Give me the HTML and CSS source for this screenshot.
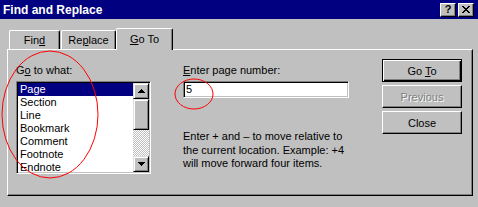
FILE: index.html
```html
<!DOCTYPE html>
<html lang="en">
<head>
  <meta charset="UTF-8" />
  <title>Find and Replace</title>
  <link rel="stylesheet" href="styles.css">
</head>
<body>
  <div class="window">
    <div class="titlebar">
      <span class="title">Find and Replace</span>
      <div class="caption-btns">
        <span class="cap-btn help">?</span>
        <span class="cap-btn close">
          <svg width="8" height="7" viewBox="0 0 8 7" shape-rendering="crispEdges">
            <path d="M0 0h2v1h-2zM6 0h2v1h-2zM1 1h2v1h-2zM5 1h2v1h-2zM2 2h4v1h-4zM3 3h2v1h-2zM2 4h4v1h-4zM1 5h2v1h-2zM5 5h2v1h-2zM0 6h2v1h-2zM6 6h2v1h-2z" fill="#000"/>
          </svg>
        </span>
      </div>
    </div>

    <div class="dialog">
      <div class="tabs">
        <div class="tab tab-find">Fin<u>d</u></div>
        <div class="tab tab-replace">Re<u>p</u>lace</div>
        <div class="tab tab-goto active"><u>G</u>o To</div>
      </div>

      <div class="panel">
        <div class="col col-what">
          <div class="label">G<u>o</u> to what:</div>
          <div class="listbox">
            <ul class="items">
              <li class="selected">Page</li>
              <li>Section</li>
              <li>Line</li>
              <li>Bookmark</li>
              <li>Comment</li>
              <li>Footnote</li>
              <li>Endnote</li>
            </ul>
            <div class="scrollbar">
              <div class="sb-btn">
                <svg width="7" height="4" viewBox="0 0 7 4" shape-rendering="crispEdges"><path d="M3 0h1v1h1v1h1v1h1v1h-7v-1h1v-1h1v-1h1z" fill="#000"/></svg>
              </div>
              <div class="sb-thumb"></div>
              <div class="sb-track"></div>
              <div class="sb-btn">
                <svg width="7" height="4" viewBox="0 0 7 4" shape-rendering="crispEdges"><path d="M0 0h7v1h-1v1h-1v1h-1v1h-1v-1h-1v-1h-1v-1h-1z" fill="#000"/></svg>
              </div>
            </div>
          </div>
        </div>

        <div class="col col-number">
          <div class="label"><u>E</u>nter page number:</div>
          <div class="textbox">5</div>
          <p class="hint">Enter + and &ndash; to move relative to<br>the current location. Example: +4<br>will move forward four items.</p>
        </div>

        <div class="col col-buttons">
          <div class="btn default"><span>Go <u>T</u>o</span></div>
          <div class="btn disabled"><span>Previous</span></div>
          <div class="btn"><span>Close</span></div>
        </div>
      </div>
    </div>

    <!-- red pen marks drawn on the screenshot -->
    <svg class="marks" width="478" height="207" viewBox="0 0 478 207">
      <ellipse cx="50" cy="114.5" rx="48" ry="63.5" fill="none" stroke="#ff0000" stroke-width="1"/>
      <ellipse cx="194" cy="94" rx="19" ry="15" fill="none" stroke="#ff0000" stroke-width="1"/>
    </svg>
  </div>
</body>
</html>
```

FILE: styles.css
```css
* {
  margin: 0;
  padding: 0;
  box-sizing: border-box;
}

html, body {
  width: 478px;
  height: 207px;
  overflow: hidden;
  background: #c0c0c0;
  font-family: "Liberation Sans", Arial, sans-serif;
  font-size: 11px;
  color: #000;
}

.window {
  position: relative;
  width: 478px;
  height: 207px;
}

u {
  text-decoration: underline;
  text-underline-offset: 1px;
}

/* title bar */
.titlebar {
  height: 19px;
  background: #000080;
  display: flex;
  align-items: center;
  padding: 0 4px 0 3px;
}

.title {
  color: #fff;
  font-weight: bold;
  font-size: 12px;
}

.caption-btns {
  margin-left: auto;
  display: flex;
  gap: 2px;
}

.cap-btn {
  width: 16px;
  height: 14px;
  background: #c0c0c0;
  border: 1px solid;
  border-color: #fff #000 #000 #fff;
  box-shadow: inset -1px -1px #808080;
  display: flex;
  align-items: center;
  justify-content: center;
  font-weight: bold;
  font-size: 11px;
  line-height: 1;
}

/* dialog + tabs */
.dialog {
  padding: 9px 0 0 7px;
}

.tabs {
  display: flex;
  align-items: flex-end;
  height: 21px;
  padding-left: 2px;
}

.tab {
  height: 19px;
  background: #c0c0c0;
  border-top: 1px solid #fff;
  border-left: 1px solid #fff;
  border-right: 1px solid #000;
  border-radius: 2px 2px 0 0;
  box-shadow: inset -1px 0 #808080;
  text-align: center;
  padding-top: 3px;
}

.tab-find {
  width: 51px;
}

.tab-replace {
  width: 55px;
  margin-left: 1px;
}

.tab-goto {
  width: 57px;
}

.tab.active {
  height: 22px;
  margin-bottom: -1px;
  position: relative;
  z-index: 1;
  padding-top: 4px;
}

.panel {
  width: 466px;
  height: 147px;
  border: 1px solid;
  border-color: #fff #000 #000 #fff;
  box-shadow: inset -1px -1px #808080;
  display: flex;
}

.label {
  height: 13px;
  line-height: 13px;
  margin-bottom: 4px;
}

/* list box */
.col-what {
  margin-left: 8px;
  padding-top: 14px;
  width: 135px;
}

.listbox {
  width: 135px;
  height: 93px;
  border: 1px solid;
  border-color: #808080 #fff #fff #808080;
  box-shadow: inset 1px 1px #000, inset -1px -1px #c0c0c0;
  padding: 1px;
  display: flex;
}

.items {
  list-style: none;
  flex: 1;
  background: #fff;
  overflow: hidden;
}

.items li {
  height: 13px;
  line-height: 13px;
  padding-left: 2px;
  white-space: nowrap;
}

.items li.selected {
  background: #000080;
  color: #fff;
}

.scrollbar {
  width: 16px;
  display: flex;
  flex-direction: column;
}

.sb-btn,
.sb-thumb {
  background: #c0c0c0;
  border: 1px solid;
  border-color: #dfdfdf #000 #000 #dfdfdf;
  box-shadow: inset 1px 1px #fff, inset -1px -1px #808080;
}

.sb-btn {
  height: 16px;
  display: flex;
  align-items: center;
  justify-content: center;
}

.sb-thumb {
  height: 31px;
}

.sb-track {
  flex: 1;
  background: repeating-conic-gradient(#fff 0 25%, #c0c0c0 0 50%) 0 0 / 2px 2px;
}

/* page number */
.col-number {
  margin-left: 32px;
  padding-top: 14px;
  width: 166px;
}

.textbox {
  height: 17px;
  background: #fff;
  border: 1px solid;
  border-color: #808080 #fff #fff #808080;
  box-shadow: inset 1px 1px #000, inset -1px -1px #c0c0c0;
  padding-left: 2px;
  line-height: 15px;
}

.hint {
  margin-top: 32px;
  line-height: 13.5px;
  white-space: nowrap;
}

/* buttons */
.col-buttons {
  margin-left: 33px;
  padding-top: 9px;
  display: flex;
  flex-direction: column;
  gap: 3px;
}

.btn {
  width: 80px;
  height: 23px;
  background: #c0c0c0;
  border: 1px solid;
  border-color: #fff #000 #000 #fff;
  box-shadow: inset -1px -1px #808080;
  display: flex;
  align-items: center;
  justify-content: center;
}

.btn.default {
  border-color: #000;
  box-shadow: inset 1px 1px #fff, inset -1px -1px #000, inset -2px -2px #808080;
}

.btn.disabled {
  color: #808080;
  text-shadow: 1px 1px #fff;
}

.marks {
  position: absolute;
  left: 0;
  top: 0;
  pointer-events: none;
}
```
